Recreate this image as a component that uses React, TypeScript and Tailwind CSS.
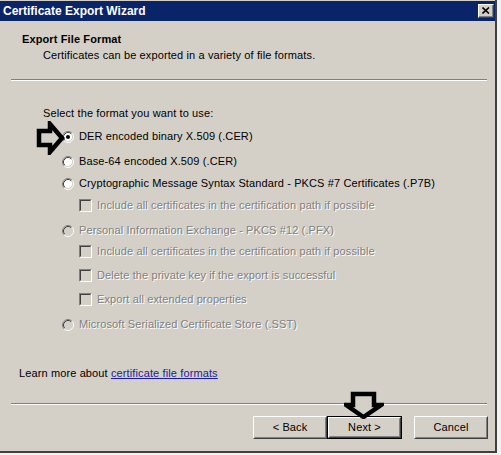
import React from "react";

const Radio = ({ checked, disabled }: { checked?: boolean; disabled?: boolean }) => (
  <svg width="12" height="12" viewBox="0 0 12 12" className="shrink-0">
    <circle cx="6" cy="6" r="4.5" fill={disabled ? "#d4d0c8" : "#ffffff"} />
    <path d="M2.11 9.89 A5.5 5.5 0 0 1 9.89 2.11" stroke="#808080" strokeWidth="1" fill="none" />
    <path d="M9.89 2.11 A5.5 5.5 0 0 1 2.11 9.89" stroke="#ffffff" strokeWidth="1" fill="none" />
    <path d="M2.82 9.18 A4.5 4.5 0 0 1 9.18 2.82" stroke="#404040" strokeWidth="1" fill="none" />
    <path d="M9.18 2.82 A4.5 4.5 0 0 1 2.82 9.18" stroke="#d4d0c8" strokeWidth="1" fill="none" />
    {checked && <circle cx="6" cy="6" r="2" fill="#000000" />}
  </svg>
);

const Check = () => (
  <div className="w-[13px] h-[13px] shrink-0 border border-t-[#808080] border-l-[#808080] border-b-white border-r-white">
    <div className="w-full h-full border border-t-[#404040] border-l-[#404040] border-b-[#d4d0c8] border-r-[#d4d0c8] bg-[#d4d0c8]" />
  </div>
);

const dis = "text-[#808080] [text-shadow:1px_1px_0_#ffffff]";

const Btn = ({ children, def }: { children: React.ReactNode; def?: boolean }) => (
  <div className={def ? "border border-black" : ""}>
    <div
      className={
        (def ? "w-[73px] h-[21px] " : "w-[74px] h-[23px] ") +
        "border border-t-white border-l-white border-b-[#404040] border-r-[#404040]"
      }
    >
      <div className="w-full h-full border border-t-[#d4d0c8] border-l-[#d4d0c8] border-b-[#808080] border-r-[#808080] flex items-center justify-center">
        {children}
      </div>
    </div>
  </div>
);

export default function App() {
  return (
    <div
      className="relative w-[501px] h-[455px] bg-[#f2f2f2] text-[11px] leading-[13px] tracking-[0.12px] text-black"
      style={{ fontFamily: '"Liberation Sans", Arial, sans-serif' }}
    >
      <div className="w-[497px] h-[453px] bg-[#d4d0c8] border-r-2 border-b-2 border-r-[#404040] border-b-[#404040] flex flex-col pt-[1px]">
        {/* Title bar */}
        <div className="h-[20px] bg-[#0a246a] flex items-center justify-between pl-[3px] pr-[1px]">
          <span className="text-white font-bold text-[12px] tracking-[0px]">Certificate Export Wizard</span>
          <div className="w-[16px] h-[14px] border border-t-white border-l-white border-b-[#404040] border-r-[#404040] bg-[#d4d0c8]">
            <div className="w-full h-full border-b border-r border-b-[#808080] border-r-[#808080] flex items-center justify-center">
              <svg width="8" height="7" viewBox="0 0 8 7">
                <path d="M0.5 0.5 L7 6.5 M7 0.5 L0.5 6.5" stroke="#000" strokeWidth="1.6" />
              </svg>
            </div>
          </div>
        </div>

        {/* Header */}
        <div className="h-[58px] pl-[22px] pt-[12px]">
          <div className="font-bold">Export File Format</div>
          <div className="pl-[21px] mt-[3px]">Certificates can be exported in a variety of file formats.</div>
        </div>
        <div className="ml-[11px] mr-[8px] h-[2px] border-t border-t-[#808080] border-b border-b-white" />

        {/* Body */}
        <div className="flex flex-col">
          <div className="pl-[43px] mt-[26px] h-[13px]">Select the format you want to use:</div>
          <div className="pl-[62px] mt-[10px] h-[13px] flex items-center gap-[5px]">
            <Radio checked />
            <span>DER encoded binary X.509 (.CER)</span>
          </div>
          <div className="pl-[62px] mt-[12px] h-[13px] flex items-center gap-[5px]">
            <Radio />
            <span>Base-64 encoded X.509 (.CER)</span>
          </div>
          <div className="pl-[62px] mt-[9px] h-[13px] flex items-center gap-[5px]">
            <Radio />
            <span>Cryptographic Message Syntax Standard - PKCS #7 Certificates (.P7B)</span>
          </div>
          <div className="pl-[79px] mt-[9px] h-[13px] flex items-center gap-[5px]">
            <Check />
            <span className={dis}>Include all certificates in the certification path if possible</span>
          </div>
          <div className="pl-[62px] mt-[12px] h-[13px] flex items-center gap-[5px]">
            <Radio disabled />
            <span className={dis}>Personal Information Exchange - PKCS #12 (.PFX)</span>
          </div>
          <div className="pl-[79px] mt-[8px] h-[13px] flex items-center gap-[5px]">
            <Check />
            <span className={dis}>Include all certificates in the certification path if possible</span>
          </div>
          <div className="pl-[79px] mt-[11px] h-[13px] flex items-center gap-[5px]">
            <Check />
            <span className={dis}>Delete the private key if the export is successful</span>
          </div>
          <div className="pl-[79px] mt-[11px] h-[13px] flex items-center gap-[5px]">
            <Check />
            <span className={dis}>Export all extended properties</span>
          </div>
          <div className="pl-[62px] mt-[12px] h-[13px] flex items-center gap-[5px]">
            <Radio disabled />
            <span className={dis}>Microsoft Serialized Certificate Store (.SST)</span>
          </div>
          <div className="pl-[19px] mt-[36px] h-[13px]">
            Learn more about <span className="text-[#1a1aa6] underline">certificate file formats</span>
          </div>
        </div>

        <div className="ml-[11px] mr-[8px] mt-[23px] h-[2px] border-t border-t-[#808080] border-b border-b-white" />

        {/* Buttons */}
        <div className="flex justify-end pr-[7px] mt-[11px]">
          <Btn>&lt; Back</Btn>
          <Btn def>Next &gt;</Btn>
          <div className="w-[12px]" />
          <Btn>Cancel</Btn>
        </div>
      </div>

      {/* Overlay arrows */}
      <svg className="absolute left-[35px] top-[121px]" width="30" height="34" viewBox="0 0 30 34">
        <polygon points="4,10 15,10 15,3 27,17 15,31 15,24 4,24" fill="#d4d0c8" stroke="#000" strokeWidth="4.5" strokeLinejoin="miter" />
      </svg>
      <svg className="absolute left-[344px] top-[391px]" width="40" height="28" viewBox="0 0 40 28">
        <polygon points="9,3 30,3 30,14 37,14 19.5,26 2,14 9,14" fill="#d4d0c8" stroke="#000" strokeWidth="4.5" strokeLinejoin="miter" />
      </svg>
    </div>
  );
}
